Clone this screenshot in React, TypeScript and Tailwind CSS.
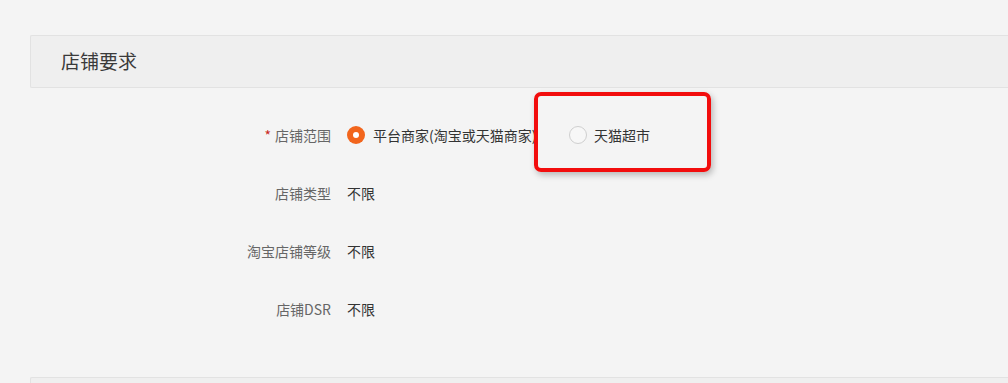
import React from "react";

const rows = [
  { label: "店铺类型", value: "不限" },
  { label: "淘宝店铺等级", value: "不限" },
  { label: "店铺DSR", value: "不限" },
];

const App = () => {
  return (
    <div
      className="relative w-[1008px] h-[383px] overflow-hidden bg-[#f4f4f4] pl-[30px] pt-[35px]"
      style={{ fontFamily: '"Noto Sans CJK SC", "Noto Sans", sans-serif' }}
    >
      {/* section header */}
      <div className="h-[53px] flex items-center pl-[30px] bg-[#efefef] border border-[#e2e2e2] border-r-0 rounded-l-[2px] text-[19px] text-[#3a3a3a]">
        店铺要求
      </div>

      {/* form */}
      <div className="mt-[18px]">
        <div className="h-[58px] flex items-center">
          <div className="w-[302px] pr-px text-right text-[14px] text-[#666]">
            <span className="text-[#c8281e] mr-1">*</span>店铺范围
          </div>
          <div className="flex items-center ml-[15px] text-[14px] text-[#333]">
            <label className="w-[222px] flex items-center gap-2 whitespace-nowrap">
              <span className="w-[18px] h-[18px] rounded-full bg-[#f2651c] flex items-center justify-center">
                <span className="w-[6px] h-[6px] rounded-full bg-white" />
              </span>
              平台商家(淘宝或天猫商家)
            </label>
            <label className="flex items-center gap-[7px] whitespace-nowrap">
              <span className="w-[18px] h-[18px] rounded-full border border-[#cfcfcf] bg-[#f7f7f7]" />
              天猫超市
            </label>
          </div>
        </div>

        {rows.map((r) => (
          <div key={r.label} className="h-[58px] flex items-center">
            <div className="w-[302px] pr-px text-right text-[14px] text-[#666]">{r.label}</div>
            <div className="ml-[15px] text-[14px] text-[#333]">{r.value}</div>
          </div>
        ))}
      </div>

      {/* next section header, cut off */}
      <div className="mt-[39px] h-[53px] bg-[#efefef] border border-[#e2e2e2] border-r-0 rounded-l-[2px]" />

      {/* annotation box */}
      <div className="absolute left-[534px] top-[92px] w-[177px] h-[80px] border-[4px] border-[#f20d0d] rounded-[7px] shadow-[2px_3px_6px_rgba(0,0,0,0.25)]" />
    </div>
  );
};

export default App;
